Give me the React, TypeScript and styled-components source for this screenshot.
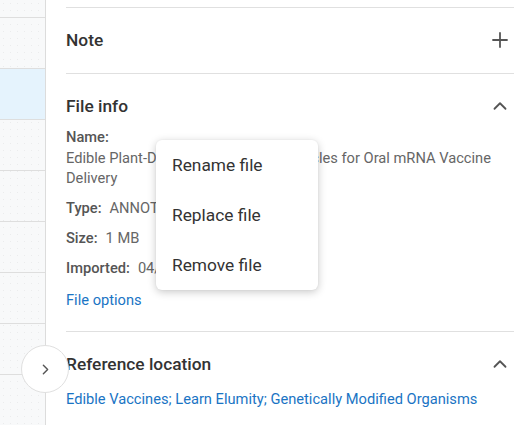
import React, { useState } from 'react';
import styled, { createGlobalStyle } from 'styled-components';
import { Plus, ChevronUp, ChevronRight } from 'lucide-react';

const GlobalStyle = createGlobalStyle`
  html, body {
    margin: 0;
    padding: 0;
    background: #fff;
  }
  * {
    box-sizing: border-box;
  }
`;

const railRows = [false, false, true, false, false, false, false, false, false];

const App = (): JSX.Element => {
  const [menuOpen] = useState(true);

  return (
    <Page>
      <GlobalStyle />
      <Rail>
        <RailList>
          {railRows.map((active, i) => (
            <RailRow key={i} active={active} />
          ))}
        </RailList>
      </Rail>
      <CollapseButton aria-label="Expand">
        <ChevronRight size={17} strokeWidth={2} />
      </CollapseButton>

      <Panel>
        <TopRule />
        <Section>
          <SectionHeader>
            <SectionTitle>Note</SectionTitle>
            <IconButton>
              <Plus size={24} strokeWidth={1.8} />
            </IconButton>
          </SectionHeader>
        </Section>

        <Section>
          <SectionHeader open>
            <SectionTitle>File info</SectionTitle>
            <IconButton>
              <ChevronUp size={22} strokeWidth={2} />
            </IconButton>
          </SectionHeader>
          <SectionBody bottom={21}>
            <NameBlock>
              <Label>Name:</Label>
              <div>
                Edible Plant-Derived Extracellular Vesicles for Oral mRNA Vaccine Delivery
              </div>
            </NameBlock>
            <InfoRow>
              <Label>Type:</Label>
              <Value>ANNOTATED PDF</Value>
            </InfoRow>
            <InfoRow>
              <Label>Size:</Label>
              <Value>1 MB</Value>
            </InfoRow>
            <InfoRow last>
              <Label>Imported:</Label>
              <Value>04/12/2023</Value>
            </InfoRow>
            <TextLink href="#">File options</TextLink>
          </SectionBody>
        </Section>

        <Section>
          <SectionHeader open>
            <SectionTitle>Reference location</SectionTitle>
            <IconButton>
              <ChevronUp size={22} strokeWidth={2} />
            </IconButton>
          </SectionHeader>
          <SectionBody top={4}>
            <TextLink href="#">
              Edible Vaccines; Learn Elumity; Genetically Modified Organisms
            </TextLink>
          </SectionBody>
        </Section>
      </Panel>

      {menuOpen && (
        <Menu role="menu">
          <MenuItem>Rename file</MenuItem>
          <MenuItem>Replace file</MenuItem>
          <MenuItem>Remove file</MenuItem>
        </Menu>
      )}
    </Page>
  );
};

const Page = styled.div`
  position: relative;
  width: 531px;
  height: 425px;
  overflow: hidden;
  display: flex;
  font-family: Roboto, 'Liberation Sans', sans-serif;
  background: #fff;
`;

const Rail = styled.div`
  width: 46px;
  flex-shrink: 0;
  height: 100%;
  overflow: hidden;
  border-right: 1px solid #dcdcdc;
  background-color: #f8f9fa;
  background-image: radial-gradient(rgba(0, 0, 0, 0.05) 0.6px, transparent 0.8px);
  background-size: 7px 7px;
`;

const RailList = styled.div`
  margin-top: -33px;
`;

const RailRow = styled.div<{ active?: boolean }>`
  height: 51px;
  border-bottom: 1px solid #dedede;
  background: ${({ active }) => (active ? '#e5f3fd' : 'transparent')};
`;

const CollapseButton = styled.button`
  position: absolute;
  left: 21px;
  top: 345px;
  width: 48px;
  height: 48px;
  border-radius: 50%;
  border: 1px solid #e0e0e0;
  background: #fff;
  color: #555;
  display: flex;
  align-items: center;
  justify-content: center;
  padding: 0;
  cursor: pointer;
`;

const Panel = styled.div`
  flex: 1;
  padding: 0 17px 0 20px;
  display: flex;
  flex-direction: column;
`;

const TopRule = styled.div`
  flex-shrink: 0;
  height: 8px;
  border-bottom: 1px solid #e0e0e0;
`;

const Section = styled.section`
  flex-shrink: 0;
  border-bottom: 1px solid #e0e0e0;
`;

const SectionHeader = styled.div<{ open?: boolean }>`
  display: flex;
  align-items: center;
  justify-content: space-between;
  padding: ${({ open }) => (open ? '22px 0 11px' : '22px 0 23px')};
  height: ${({ open }) => (open ? '53px' : '65px')};
`;

const SectionTitle = styled.h3`
  margin: 0;
  font-size: 13pt;
  font-weight: 500;
  line-height: 20px;
  color: #333;
`;

const IconButton = styled.span`
  display: flex;
  align-items: center;
  justify-content: center;
  width: 24px;
  height: 24px;
  margin-right: 2px;
  color: #555;
`;

const SectionBody = styled.div<{ top?: number; bottom?: number }>`
  padding-top: ${({ top }) => top ?? 0}px;
  padding-bottom: ${({ bottom }) => bottom ?? 22}px;
  font-size: 11pt;
  line-height: 20.5px;
  color: #666;
`;

const NameBlock = styled.div`
  margin-bottom: 9.5px;
`;

const Label = styled.span`
  font-weight: 500;
  color: #555;
`;

const InfoRow = styled.div<{ last?: boolean }>`
  display: flex;
  gap: 8px;
  margin-bottom: ${({ last }) => (last ? '11px' : '9.5px')};
`;

const Value = styled.span``;

const TextLink = styled.a`
  display: inline-block;
  color: #1a74c4;
  text-decoration: none;
  font-size: 11pt;
  line-height: 20px;
`;

const Menu = styled.div`
  position: absolute;
  left: 156px;
  top: 140px;
  width: 162px;
  background: #fff;
  border-radius: 6px;
  box-shadow: 0 2px 8px rgba(0, 0, 0, 0.22), 0 0 2px rgba(0, 0, 0, 0.06);
  padding: 0;
`;

const MenuItem = styled.div`
  height: 50px;
  display: flex;
  align-items: center;
  padding-left: 16px;
  font-size: 13pt;
  color: #333;
  cursor: pointer;
`;

export default App;
